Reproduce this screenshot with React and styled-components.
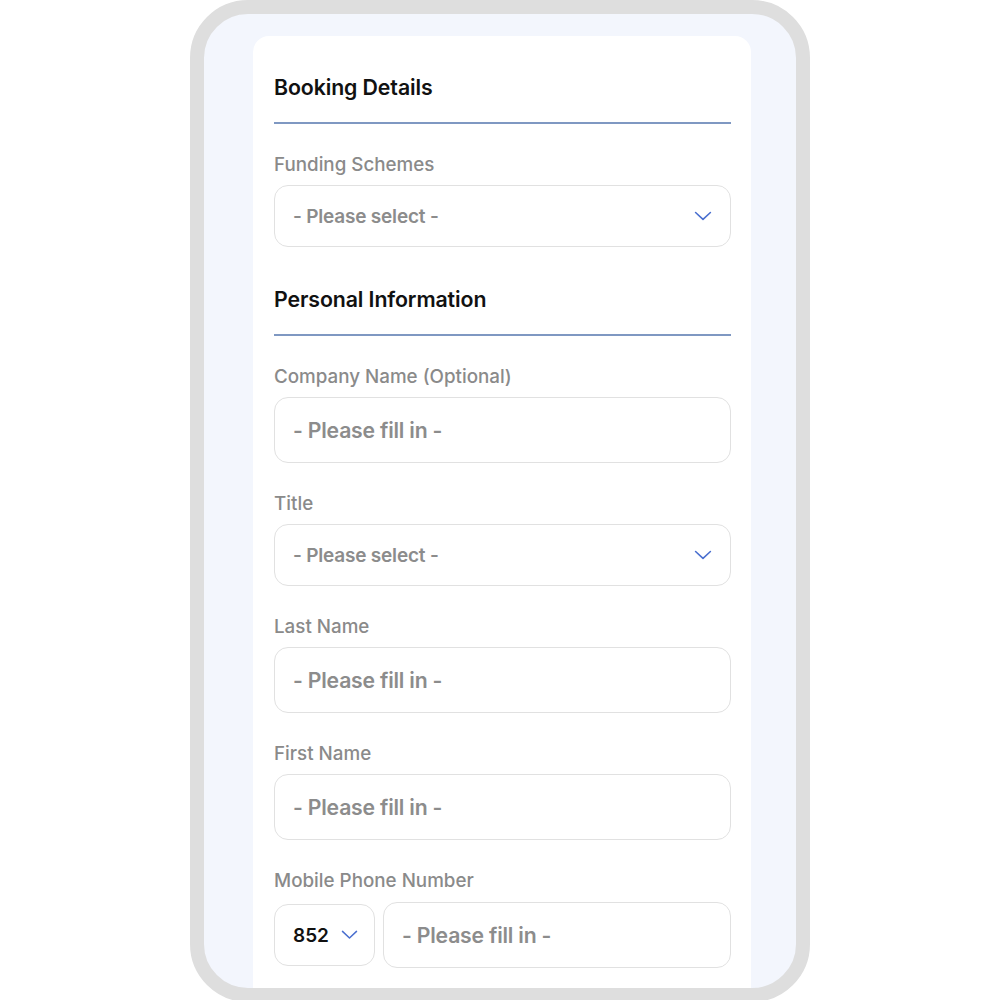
import React from "react";
import styled, { createGlobalStyle } from "styled-components";

const Global = createGlobalStyle`
  html, body { margin: 0; padding: 0; background: #ffffff; overflow: hidden; }
  body { font-family: Inter, Roboto, "Liberation Sans", sans-serif; }
  * { box-sizing: border-box; }
`;

const Page = styled.div`
  width: 1000px;
  height: 1000px;
  display: flex;
  justify-content: center;
  overflow: hidden;
`;

const Phone = styled.div`
  width: 620px;
  height: 1002px;
  flex-shrink: 0;
  border: 14px solid #dedede;
  border-radius: 58px;
  background: #f3f6fd;
  padding: 22px 45px 0 49px;
  display: flex;
  flex-direction: column;
  overflow: hidden;
`;

const Card = styled.div`
  flex: 1;
  background: #ffffff;
  border-radius: 16px 16px 0 0;
  padding: 39px 20px 0 21px;
  display: flex;
  flex-direction: column;
`;

const SectionTitle = styled.h2`
  margin: ${(p) => (p.$first ? "0" : "40px")} 0 0;
  font-size: 21.3px;
  line-height: 24px;
  font-weight: 600;
  color: #111111;
  letter-spacing: -0.1px;
`;

const Divider = styled.div`
  height: 2px;
  background: #7f98c2;
  margin-top: 23px;
`;

const Field = styled.div`
  display: flex;
  flex-direction: column;
  margin-top: 30px;
`;

const Label = styled.label`
  font-size: 18.8px;
  line-height: 22px;
  font-weight: 500;
  color: #8a8a8a;
  margin-bottom: ${(p) => (p.$gap ? p.$gap : "9px")};
`;

const Box = styled.div`
  height: ${(p) => (p.$select ? "62px" : "66px")};
  border: 1px solid #e1e1e1;
  border-radius: 14px;
  background: #ffffff;
  display: flex;
  align-items: center;
  justify-content: space-between;
  padding: 0 18px 0 18px;
  flex: ${(p) => (p.$grow ? "1" : "none")};
  width: ${(p) => (p.$width ? p.$width : "auto")};
`;

const Placeholder = styled.span`
  font-size: ${(p) => (p.$small ? "19px" : "21.2px")};
  font-weight: 600;
  color: #8c8c8c;
  letter-spacing: -0.2px;
`;

const Code = styled.span`
  font-size: 19px;
  font-weight: 600;
  color: #111111;
`;

const PhoneRow = styled.div`
  display: flex;
  align-items: center;
  gap: 8px;
`;

const CodeBox = styled(Box)`
  justify-content: flex-start;
  gap: 12px;
  padding: 0 0 0 18px;
`;

const Chevron = ({ size = 18 }) => (
  <svg width={size} height={size * 0.55} viewBox="0 0 18 10" fill="none">
    <path d="M1.5 1.5 L9 8.5 L16.5 1.5" stroke="#4a6fcf" strokeWidth="1.6" strokeLinecap="round" strokeLinejoin="round" />
  </svg>
);

const SelectField = ({ label }) => (
  <Field>
    <Label>{label}</Label>
    <Box $select>
      <Placeholder $small>- Please select -</Placeholder>
      <Chevron />
    </Box>
  </Field>
);

const InputField = ({ label }) => (
  <Field>
    <Label>{label}</Label>
    <Box>
      <Placeholder>- Please fill in -</Placeholder>
    </Box>
  </Field>
);

export default function App() {
  return (
    <>
      <Global />
      <Page>
        <Phone>
          <Card>
            <SectionTitle $first>Booking Details</SectionTitle>
            <Divider />
            <SelectField label="Funding Schemes" />

            <SectionTitle>Personal Information</SectionTitle>
            <Divider />
            <InputField label="Company Name (Optional)" />
            <SelectField label="Title" />
            <InputField label="Last Name" />
            <InputField label="First Name" />

            <Field>
              <Label $gap="10px">Mobile Phone Number</Label>
              <PhoneRow>
                <CodeBox $select $width="101px">
                  <Code>852</Code>
                  <Chevron size={17} />
                </CodeBox>
                <Box $grow>
                  <Placeholder>- Please fill in -</Placeholder>
                </Box>
              </PhoneRow>
            </Field>
          </Card>
        </Phone>
      </Page>
    </>
  );
}
